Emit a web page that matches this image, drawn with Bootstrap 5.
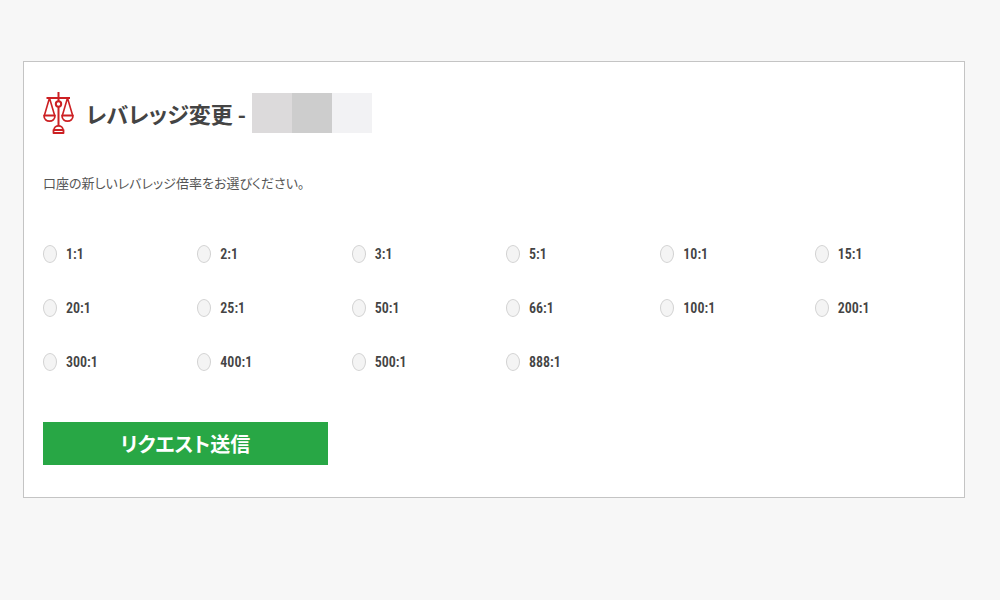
<!DOCTYPE html>
<html lang="ja">
<head>
<meta charset="utf-8">
<meta name="viewport" content="width=device-width, initial-scale=1">
<title>レバレッジ変更</title>
<link href="https://cdn.jsdelivr.net/npm/bootstrap@5.3.0/dist/css/bootstrap.min.css" rel="stylesheet">
<style>
  body { background: #f7f7f7; color: #444; font-family: "Noto Sans CJK JP", sans-serif; }
  .page { padding: 61px 35px 61px 23px; }
  .panel { border-color: #c4c4c4; border-radius: 0; }
  .panel .card-body { padding: 30px 19px 32px; }
  .scales { width: 31px; height: 42px; flex: none; margin-right: 12px; }
  .title { font-size: 22px; line-height: 40px; font-weight: 700; color: #444; font-feature-settings: "palt"; }
  .masked { margin-left: 6px; }
  .masked span { width: 40px; height: 40px; }
  .m1 { background: #dcdadb; }
  .m2 { background: #cdcdcd; }
  .m3 { background: #f2f2f4; }
  .intro { font-size: 13px; line-height: 20px; margin: 39px 0 50px; color: #555; font-feature-settings: "palt"; }
  .options { row-gap: 32px; margin-bottom: 49px; }
  .option { height: 22px; font-family: "Roboto Condensed", "Liberation Sans Narrow", sans-serif; font-size: 14px; line-height: 22px; font-weight: 600; }
  .option .form-check-input { width: 14px; height: 18px; margin: 0 9px 0 0; border: 1px solid #d2d2d2; background-color: #f4f4f4; border-radius: 50%; flex: none; }
  .option .form-check-input:checked { background-color: #28a745; border-color: #28a745; }
  .send { --bs-btn-bg: #28a745; --bs-btn-border-color: #28a745; border-radius: 0; height: 43px; padding: 0; font-size: 20px; line-height: 38px; font-weight: 700; font-feature-settings: "palt"; }
</style>
</head>
<body>
<main class="page">
  <form class="card panel">
    <div class="card-body">
      <div class="d-flex align-items-center">
        <svg class="scales" viewBox="0 0 31 42" fill="none" stroke="#cc2023" stroke-width="2" stroke-linejoin="round" aria-hidden="true">
          <path d="M15.500 0v9M15.500 15v19M3.500 6h23.500"/>
          <circle cx="15.500" cy="12" r="2.700"/>
          <path stroke-width="1.600" d="M6.500 6L1.500 23M6.500 6l5 17M24.500 6l-5 17M24.500 6l5 17"/>
          <path stroke-width="1.800" d="M1 23.500h11c0 7.500-11 7.500-11 0zM19 23.500h11c0 7.500-11 7.500-11 0zM11 38c0-5.500 9-5.500 9 0M10.500 38h10v3h-10z"/>
        </svg>
        <h1 class="title m-0">レバレッジ変更 -</h1>
        <div class="masked d-flex" aria-hidden="true"><span class="m1"></span><span class="m2"></span><span class="m3"></span></div>
      </div>
      <p class="intro">口座の新しいレバレッジ倍率をお選びください。</p>
      <div class="row row-cols-6 options">
        <div class="col"><div class="option d-flex align-items-center"><input class="form-check-input" type="radio" name="leverage" id="l1" value="1"><label for="l1">1:1</label></div></div>
        <div class="col"><div class="option d-flex align-items-center"><input class="form-check-input" type="radio" name="leverage" id="l2" value="2"><label for="l2">2:1</label></div></div>
        <div class="col"><div class="option d-flex align-items-center"><input class="form-check-input" type="radio" name="leverage" id="l3" value="3"><label for="l3">3:1</label></div></div>
        <div class="col"><div class="option d-flex align-items-center"><input class="form-check-input" type="radio" name="leverage" id="l5" value="5"><label for="l5">5:1</label></div></div>
        <div class="col"><div class="option d-flex align-items-center"><input class="form-check-input" type="radio" name="leverage" id="l10" value="10"><label for="l10">10:1</label></div></div>
        <div class="col"><div class="option d-flex align-items-center"><input class="form-check-input" type="radio" name="leverage" id="l15" value="15"><label for="l15">15:1</label></div></div>
        <div class="col"><div class="option d-flex align-items-center"><input class="form-check-input" type="radio" name="leverage" id="l20" value="20"><label for="l20">20:1</label></div></div>
        <div class="col"><div class="option d-flex align-items-center"><input class="form-check-input" type="radio" name="leverage" id="l25" value="25"><label for="l25">25:1</label></div></div>
        <div class="col"><div class="option d-flex align-items-center"><input class="form-check-input" type="radio" name="leverage" id="l50" value="50"><label for="l50">50:1</label></div></div>
        <div class="col"><div class="option d-flex align-items-center"><input class="form-check-input" type="radio" name="leverage" id="l66" value="66"><label for="l66">66:1</label></div></div>
        <div class="col"><div class="option d-flex align-items-center"><input class="form-check-input" type="radio" name="leverage" id="l100" value="100"><label for="l100">100:1</label></div></div>
        <div class="col"><div class="option d-flex align-items-center"><input class="form-check-input" type="radio" name="leverage" id="l200" value="200"><label for="l200">200:1</label></div></div>
        <div class="col"><div class="option d-flex align-items-center"><input class="form-check-input" type="radio" name="leverage" id="l300" value="300"><label for="l300">300:1</label></div></div>
        <div class="col"><div class="option d-flex align-items-center"><input class="form-check-input" type="radio" name="leverage" id="l400" value="400"><label for="l400">400:1</label></div></div>
        <div class="col"><div class="option d-flex align-items-center"><input class="form-check-input" type="radio" name="leverage" id="l500" value="500"><label for="l500">500:1</label></div></div>
        <div class="col"><div class="option d-flex align-items-center"><input class="form-check-input" type="radio" name="leverage" id="l888" value="888"><label for="l888">888:1</label></div></div>
      </div>
      <div class="row">
        <div class="col-4"><button type="submit" class="btn btn-success send w-100">リクエスト送信</button></div>
      </div>
    </div>
  </form>
</main>
<script src="https://cdn.jsdelivr.net/npm/bootstrap@5.3.0/dist/js/bootstrap.bundle.min.js"></script>
</body>
</html>
